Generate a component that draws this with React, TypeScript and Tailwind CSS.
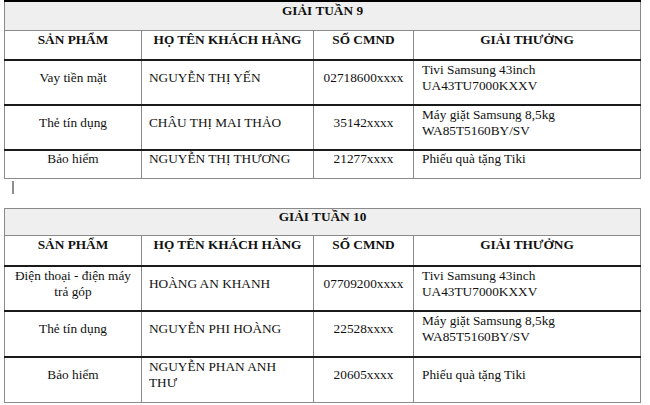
const SERIF = "font-['Liberation_Serif','Times_New_Roman',serif]";

type Row = {
  product: string[];
  name: string[];
  id: string;
  prize: string[];
  h: string;
};

const week9: Row[] = [
  { product: ["Vay tiền mặt"], name: ["NGUYỄN THỊ YẾN"], id: "02718600xxxx", prize: ["Tivi Samsung 43inch", "UA43TU7000KXXV"], h: "h-[45px]" },
  { product: ["Thẻ tín dụng"], name: ["CHÂU THỊ MAI THẢO"], id: "35142xxxx", prize: ["Máy giặt Samsung 8,5kg", "WA85T5160BY/SV"], h: "h-[45px]" },
  { product: ["Bảo hiểm"], name: ["NGUYỄN THỊ THƯƠNG"], id: "21277xxxx", prize: ["Phiếu quà tặng Tiki"], h: "h-[28px]" },
];

const week10: Row[] = [
  { product: ["Điện thoại - điện máy", "trả góp"], name: ["HOÀNG AN KHANH"], id: "07709200xxxx", prize: ["Tivi Samsung 43inch", "UA43TU7000KXXV"], h: "h-[45px]" },
  { product: ["Thẻ tín dụng"], name: ["NGUYỄN PHI HOÀNG"], id: "22528xxxx", prize: ["Máy giặt Samsung 8,5kg", "WA85T5160BY/SV"], h: "h-[46px]" },
  { product: ["Bảo hiểm"], name: ["NGUYỄN PHAN ANH", "THƯ"], id: "20605xxxx", prize: ["Phiếu quà tặng Tiki"], h: "h-[45px]" },
];

function Lines({ items }: { items: string[] }) {
  return (
    <>
      {items.map((t, i) => (
        <span key={i} className="block">
          {t}
        </span>
      ))}
    </>
  );
}

const cell = "border border-[#8a8a8a] align-middle pt-0 pb-[10px] leading-4";
const dataCell = cell + " border-t-2 border-t-[#1a1a1a]";

function PrizeTable({ title, rows, topDark, headH, titleH }: { title: string; rows: Row[]; topDark: boolean; headH: string; titleH: string }) {
  return (
    <table className={`ml-[4px] w-[636px] table-fixed border-collapse text-[13.3px] text-[#111] ${SERIF}`}>
      <colgroup>
        <col className="w-[137px]" />
        <col className="w-[172px]" />
        <col className="w-[100px]" />
        <col className="w-[227px]" />
      </colgroup>
      <tbody>
        <tr className={titleH}>
          <td
            colSpan={4}
            className={`${cell} bg-[#efefef] text-center font-bold ${topDark ? "border-t-2 border-t-black" : ""}`}
          >
            {title}
          </td>
        </tr>
        <tr className={headH}>
          <td className={`${cell} text-center font-bold`}>SẢN PHẨM</td>
          <td className={`${cell} text-center font-bold`}>HỌ TÊN KHÁCH HÀNG</td>
          <td className={`${cell} text-center font-bold`}>SỐ CMND</td>
          <td className={`${cell} text-center font-bold`}>GIẢI THƯỞNG</td>
        </tr>
        {rows.map((r, i) => (
          <tr key={i} className={r.h}>
            <td className={`${dataCell} text-center`}>
              <Lines items={r.product} />
            </td>
            <td className={`${dataCell} pl-[7px] text-left`}>
              <Lines items={r.name} />
            </td>
            <td className={`${dataCell} text-center`}>{r.id}</td>
            <td className={`${dataCell} pl-[8px] text-left`}>
              <Lines items={r.prize} />
            </td>
          </tr>
        ))}
      </tbody>
    </table>
  );
}

export default function App() {
  return (
    <div className="h-[405px] w-[650px] overflow-hidden bg-white">
      <PrizeTable title="GIẢI TUẦN 9" rows={week9} topDark titleH="h-[29px]" headH="h-[30px]" />
      <div className="flex h-[29px] pl-[12px] pt-[2px]">
        <div className="h-[13px] w-[2px] bg-[#8f8f8f]" />
      </div>
      <PrizeTable title="GIẢI TUẦN 10" rows={week10} topDark={false} titleH="h-[26px]" headH="h-[31px]" />
    </div>
  );
}
